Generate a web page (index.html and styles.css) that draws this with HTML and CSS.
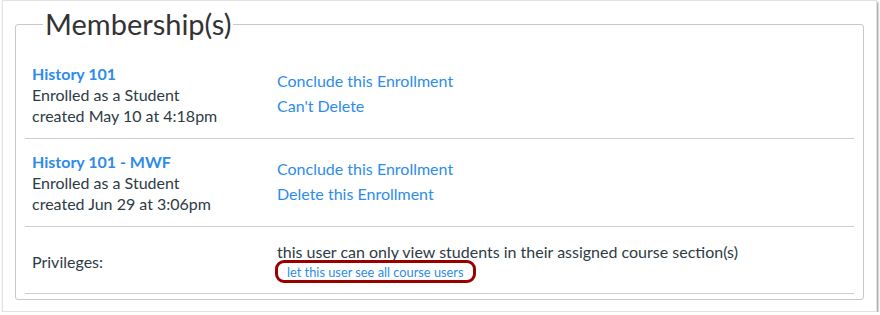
FILE: index.html
```html
<!DOCTYPE html>
<html>

<head>
    <link rel="stylesheet" href="styles.css">
    <title>Membership(s)</title>
</head>

<body>
    <div class="frame">
        <fieldset class="memberships">
            <legend class="memberships_title">Membership(s)</legend>

            <div class="row">
                <div class="row_left">
                    <a class="course_link" href="#">History 101</a><br>
                    Enrolled as a Student<br>
                    created May 10 at 4:18pm
                </div>
                <div class="row_right actions">
                    <a class="action_link" href="#">Conclude this Enrollment</a>
                    <a class="action_link" href="#">Can't Delete</a>
                </div>
            </div>

            <div class="row">
                <div class="row_left">
                    <a class="course_link" href="#">History 101 - MWF</a><br>
                    Enrolled as a Student<br>
                    created Jun 29 at 3:06pm
                </div>
                <div class="row_right actions">
                    <a class="action_link" href="#">Conclude this Enrollment</a>
                    <a class="action_link" href="#">Delete this Enrollment</a>
                </div>
            </div>

            <div class="row privileges">
                <div class="row_left privileges_label">Privileges:</div>
                <div class="row_right">
                    <div class="privileges_text">this user can only view students in their assigned course section(s)</div>
                    <span class="highlight"><a class="small_link" href="#">let this user see all course users</a></span>
                </div>
            </div>
        </fieldset>
    </div>
</body>

</html>
```

FILE: styles.css
```css
body {
    margin: 0;
    background: #ffffff;
    font-family: Lato, "Noto Sans", sans-serif;
    color: #2d3b45;
}

a {
    text-decoration: none;
}

.frame {
    width: 875px;
    height: 312px;
    margin: 0 0 0 2px;
    border: 1px solid #e2e2e2;
    box-shadow: 1px 2px 2px rgba(0, 0, 0, 0.45);
    background: #ffffff;
    box-sizing: border-box;
    padding: 9px 12px 0 12px;
}

.memberships {
    margin: 0;
    padding: 13px 9px 5px 9px;
    border: 1px solid #c9c9c9;
    border-radius: 3px;
}

.memberships_title {
    margin-left: 18px;
    padding: 0 2px;
    font-size: 29px;
    line-height: 28px;
    color: #333333;
}

.row {
    display: flex;
    align-items: center;
    padding: 12px 0 12px 7px;
    border-bottom: 1px solid #c7cdd1;
    font-size: 16px;
    line-height: 21px;
}

.row_left {
    width: 245px;
}

.row_right {
    display: flex;
    flex-direction: column;
    align-items: flex-start;
}

.actions {
    margin-bottom: 4px;
}

.course_link {
    color: #2d8ceb;
    font-weight: bold;
}

.action_link {
    color: #2d8ceb;
    line-height: 25px;
}

.privileges {
    padding: 16px 0 10px 7px;
}

.privileges_label {
    margin-bottom: 4px;
}

.privileges_text {
    line-height: 18px;
}

.highlight {
    margin-top: -1px;
    margin-left: -2px;
    padding: 0 9px 0 9px;
    border: 3px solid #990000;
    border-radius: 9px;
    line-height: 16px;
}

.small_link {
    color: #2d8ceb;
    font-size: 12.8px;
}
```
